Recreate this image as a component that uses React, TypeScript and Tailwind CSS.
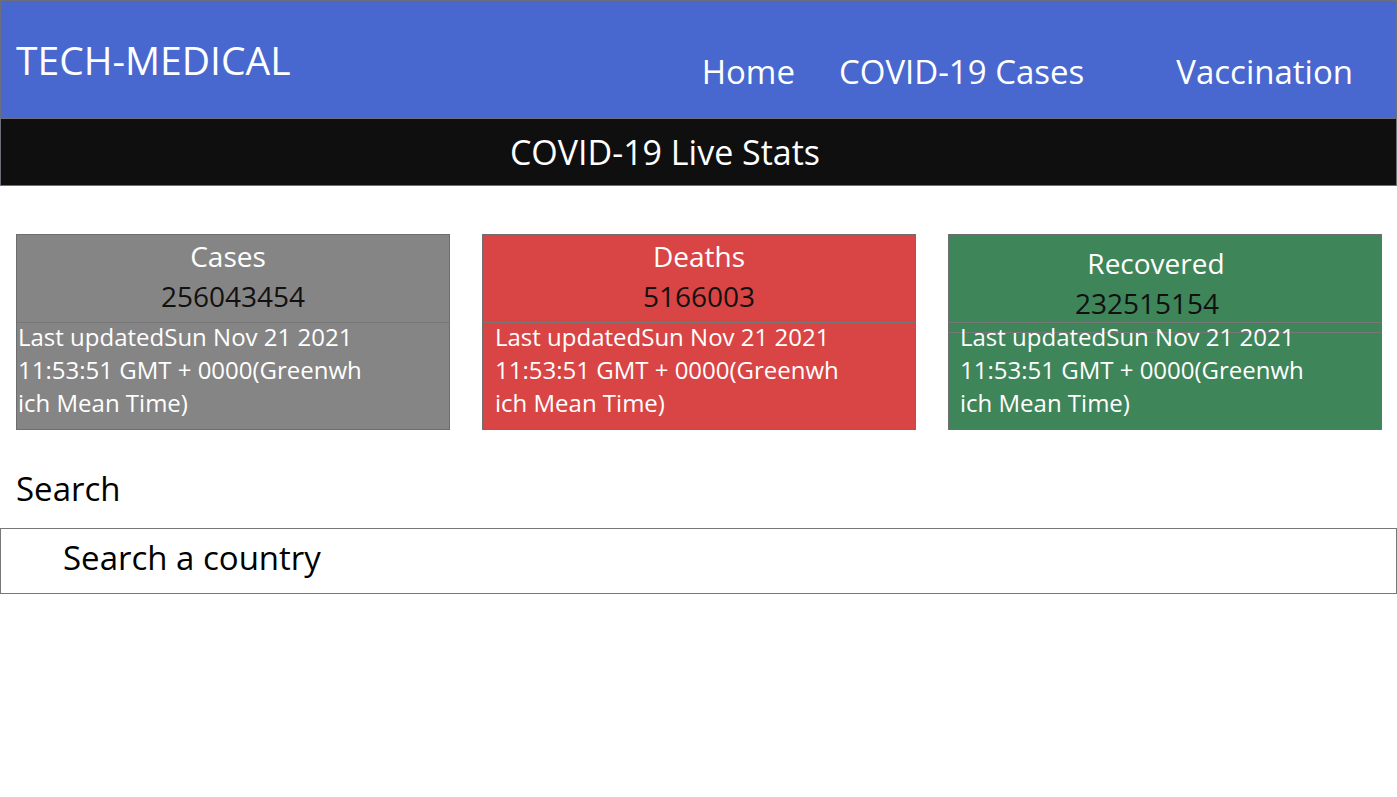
import React from "react";

const font = { fontFamily: '"Open Sans", "Noto Sans", sans-serif' };

function Card({
  title,
  value,
  bg,
  padBody,
  titleShift,
  valueShift,
  tall,
}: {
  title: string;
  value: string;
  bg: string;
  padBody: string;
  titleShift: string;
  valueShift: string;
  tall?: boolean;
}) {
  return (
    <div className={`flex-1 border border-[#6e6e6e] ${bg} h-[196px] flex flex-col`}>
      <div className={`flex flex-col items-center h-[87px] ${tall ? "pt-[8px]" : "pt-[1px]"}`}>
        <div className={`text-white text-[28px] leading-[40px] ${titleShift}`}>{title}</div>
        <div className={`text-[#111] text-[28px] leading-[40px] ${valueShift}`}>{value}</div>
      </div>
      <div className="border-t border-[#777]" />
      {tall && <div className="border-t border-[#777] mt-[9px] -mb-[10px]" />}
      <div className={`text-white text-[24px] leading-[33px] -mt-[3px] ${padBody}`}>
        <div>Last updatedSun Nov 21 2021</div>
        <div>11:53:51 GMT + 0000(Greenwh</div>
        <div>ich Mean Time)</div>
      </div>
    </div>
  );
}

export default function App() {
  return (
    <div style={font} className="w-[1397px] min-h-[797px] bg-white">
      <header className="h-[119px] bg-[#4868cf] border border-[#6c6f7a] flex items-start">
        <div className="text-white text-[39px] pl-[15px] pt-[34px] leading-[50px]">TECH-MEDICAL</div>
        <nav className="ml-auto flex text-white text-[33px] pt-[50px] leading-[42px] pr-[43px]">
          <span>Home</span>
          <span className="ml-[44px]">COVID-19 Cases</span>
          <span className="ml-[92px]">Vaccination</span>
        </nav>
      </header>
      <div className="h-[67px] bg-[#0f0f0f] border border-[#6c6f7a] border-t-0 flex items-center justify-center">
        <span className="text-white text-[34px] leading-[40px] pr-[67px]">COVID-19 Live Stats</span>
      </div>
      <div className="flex gap-[32px] pl-[16px] pr-[15px] pt-[48px]">
        <Card title="Cases" value="256043454" bg="bg-[#868585]" padBody="pl-[1px]" titleShift="mr-[10px]" valueShift="" />
        <Card title="Deaths" value="5166003" bg="bg-[#d94545]" padBody="pl-[12px]" titleShift="" valueShift="" />
        <Card
          title="Recovered"
          value="232515154"
          bg="bg-[#3f855a]"
          padBody="pl-[11px]"
          titleShift="mr-[18px]"
          valueShift="mr-[36px]"
          tall
        />
      </div>
      <div className="text-black text-[33px] leading-[40px] pl-[16px] pt-[39px]">Search</div>
      <div className="mt-[19px] h-[66px] border border-[#777] flex items-center">
        <span className="text-black text-[33px] pl-[62px] pb-[6px] leading-[40px]">Search a country</span>
      </div>
    </div>
  );
}
